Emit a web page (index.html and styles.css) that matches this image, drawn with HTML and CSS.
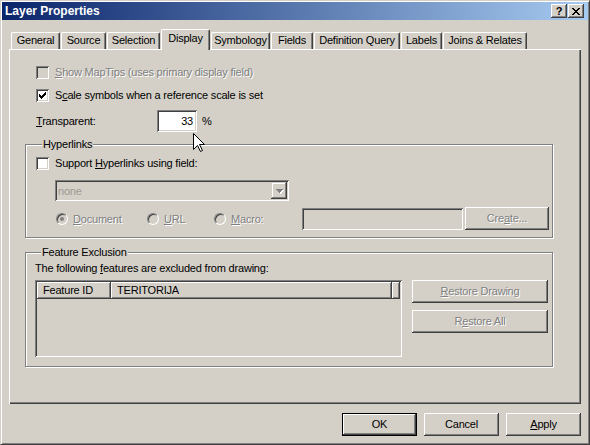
FILE: index.html
```html
<!DOCTYPE html>
<html>
<head>
<meta charset="utf-8">
<title>Layer Properties</title>
<link rel="stylesheet" href="styles.css">
</head>
<body>
<div class="window">
  <div class="titlebar">
    <span class="title">Layer Properties</span>
    <div class="tbtns">
      <span class="tbtn help">?</span>
      <span class="tbtn close"><svg width="8" height="7" viewBox="0 0 8 7" shape-rendering="crispEdges"><path d="M0 0h2v1h-2zM6 0h2v1h-2zM1 1h2v1h-2zM5 1h2v1h-2zM2 2h4v1h-4zM3 3h2v1h-2zM2 4h4v1h-4zM1 5h2v1h-2zM5 5h2v1h-2zM0 6h2v1h-2zM6 6h2v1h-2z" fill="#000"/></svg></span>
    </div>
  </div>

  <div class="tabs">
    <div class="tab w-general">General</div>
    <div class="tab w-source">Source</div>
    <div class="tab w-selection">Selection</div>
    <div class="tab w-display sel">Display</div>
    <div class="tab w-symbology">Symbology</div>
    <div class="tab w-fields">Fields</div>
    <div class="tab w-defq">Definition Query</div>
    <div class="tab w-labels">Labels</div>
    <div class="tab w-joins">Joins &amp; Relates</div>
  </div>

  <div class="panel">
    <div class="row-check first">
      <span class="check disabled"></span>
      <span class="dis"><u>S</u>how MapTips (uses primary display field)</span>
    </div>
    <div class="row-check second">
      <span class="check"><svg width="7" height="7" viewBox="0 0 7 7" shape-rendering="crispEdges"><path d="M6 0h1v1h-1zM5 1h2v1h-2zM0 2h1v1h-1zM4 2h3v1h-3zM0 3h2v1h-2zM3 3h3v1h-3zM0 4h5v1h-5zM1 5h3v1h-3zM2 6h1v1h-1z" fill="#000"/></svg></span>
      <span>S<u>c</u>ale symbols when a reference scale is set</span>
    </div>
    <div class="row-transp">
      <span class="transp-label"><u>T</u>ransparent:</span>
      <span class="textbox num">33</span>
      <span class="pct">%</span>
    </div>

    <div class="group g-hyper">
      <span class="gtitle">Hyperlinks</span>
      <div class="row-check in-group">
        <span class="check"></span>
        <span>Support <u>H</u>yperlinks using field:</span>
      </div>
      <div class="combo">
        <span class="combo-text">none</span>
        <span class="combo-btn"><svg width="8" height="5" viewBox="0 0 8 5" shape-rendering="crispEdges"><path d="M1 1h7v1h-7zM2 2h5v1h-5zM3 3h3v1h-3zM4 4h1v1h-1z" fill="#fff"/><path d="M0 0h7v1h-7zM1 1h5v1h-5zM2 2h3v1h-3zM3 3h1v1h-1z" fill="#808080"/></svg></span>
      </div>
      <div class="row-radio">
        <span class="radio-item r-doc"><span class="radio on"><span class="dot"></span></span><span class="dis"><u>D</u>ocument</span></span>
        <span class="radio-item r-url"><span class="radio"></span><span class="dis"><u>U</u>RL</span></span>
        <span class="radio-item r-macro"><span class="radio"></span><span class="dis"><u>M</u>acro:</span></span>
        <span class="textbox macro-box"></span>
        <span class="button create dis">Cre<u>a</u>te...</span>
      </div>
    </div>

    <div class="group g-excl">
      <span class="gtitle">Feature Exclusion</span>
      <div class="excl-text">The following <u>f</u>eatures are excluded from drawing:</div>
      <div class="excl-row">
        <div class="listview">
          <div class="lv-header">
            <span class="lv-col c1">Feature ID</span>
            <span class="lv-col c2">TERITORIJA</span>
            <span class="lv-col c3"></span>
          </div>
        </div>
        <div class="excl-btns">
          <span class="button restore dis"><u>R</u>estore Drawing</span>
          <span class="button restore dis">R<u>e</u>store All</span>
        </div>
      </div>
    </div>
  </div>

  <div class="btnrow">
    <span class="button main default">OK</span>
    <span class="button main">Cancel</span>
    <span class="button main"><u>A</u>pply</span>
  </div>
</div>

<svg class="cursor" width="13" height="20" viewBox="0 0 13 20"><path d="M0.5 0.5 L0.5 16.5 L4.5 12.5 L7.5 18.5 L9.5 17.5 L6.5 11.5 L11.5 11.5 Z" fill="#fff" stroke="#000" stroke-width="1" stroke-linejoin="miter"/></svg>
</body>
</html>
```

FILE: styles.css
```css
* { box-sizing: border-box; }
html, body { margin: 0; padding: 0; }
body {
  width: 590px;
  height: 445px;
  overflow: hidden;
  position: relative;
  background: #D4D0C8;
  font-family: "Liberation Sans", Arial, sans-serif;
  font-size: 11px;
  letter-spacing: -0.2px;
  color: #000;
}
u { text-decoration: underline; text-underline-offset: 1px; }

.window {
  width: 590px;
  height: 445px;
  border: 1px solid;
  border-color: #D4D0C8 #404040 #404040 #D4D0C8;
  box-shadow: inset 1px 1px #fff, inset -1px -1px #808080;
  padding: 1px;
  background: #D4D0C8;
  display: flex;
  flex-direction: column;
}

.titlebar {
  height: 18px;
  flex: none;
  background: linear-gradient(to right, #0A246A, #A6CAF0);
  display: flex;
  align-items: center;
  justify-content: space-between;
  padding: 0 4px 0 3px;
}
.title {
  color: #fff;
  font-weight: bold;
  font-size: 12px;
  letter-spacing: 0;
}
.tbtns { display: flex; gap: 1px; }
.tbtn {
  width: 16px;
  height: 14px;
  background: #D4D0C8;
  box-shadow: inset -1px -1px #404040, inset 1px 1px #fff, inset -2px -2px #808080;
  display: flex;
  align-items: center;
  justify-content: center;
  font-weight: bold;
  font-size: 11px;
  letter-spacing: 0;
  line-height: 14px;
}
.tbtn svg { display: block; }

.tabs {
  display: flex;
  align-items: flex-end;
  gap: 1px;
  height: 20px;
  margin: 9px 0 0 9px;
  position: relative;
  z-index: 1;
  flex: none;
}
.tab {
  height: 17px;
  background: #D4D0C8;
  border-top: 1px solid #fff;
  border-left: 1px solid #fff;
  border-right: 1px solid #404040;
  border-radius: 2px 2px 0 0;
  box-shadow: inset -1px 0 #808080;
  text-align: center;
  line-height: 15px;
  white-space: nowrap;
}
.tab.sel {
  height: 21px;
  margin-bottom: -1px;
  line-height: 16px;
}
.w-general { width: 49px; }
.w-source { width: 45px; }
.w-selection { width: 53px; }
.w-display { width: 49px; }
.w-symbology { width: 59px; }
.w-fields { width: 42px; }
.w-defq { width: 86px; }
.w-labels { width: 41px; }
.w-joins { width: 84px; }

.panel {
  flex: none;
  width: 572px;
  height: 355px;
  margin-left: 7px;
  box-shadow: inset 1px 1px #fff, inset -1px -1px #404040, inset -2px -2px #808080;
  padding-left: 16px;
  display: flex;
  flex-direction: column;
}

.row-check {
  display: flex;
  align-items: center;
  gap: 6px;
  height: 13px;
  line-height: 13px;
  margin-left: 11px;
  white-space: nowrap;
}
.row-check.first { margin-top: 17px; }
.row-check.second { margin-top: 10px; }
.row-check.in-group { margin: 6px 0 0 0; }

.check {
  width: 13px;
  height: 13px;
  flex: none;
  background: #fff;
  box-shadow: inset 1px 1px #808080, inset -1px -1px #fff, inset 2px 2px #404040, inset -2px -2px #D4D0C8;
  display: flex;
  align-items: center;
  justify-content: center;
}
.check.disabled { background: #D4D0C8; }
.check svg { display: block; }

.dis { color: #808080; text-shadow: 1px 1px 0 #fff; }

.row-transp {
  display: flex;
  align-items: center;
  height: 22px;
  margin: 8px 0 0 11px;
}
.transp-label { width: 121px; }
.textbox {
  background: #fff;
  box-shadow: inset 1px 1px #808080, inset -1px -1px #fff, inset 2px 2px #404040, inset -2px -2px #D4D0C8;
}
.num {
  width: 40px;
  height: 22px;
  line-height: 22px;
  text-align: right;
  padding-right: 4px;
}
.pct { margin-left: 5px; }

.group {
  width: 528px;
  border: 1px solid #808080;
  box-shadow: inset 1px 1px #fff, 1px 1px #fff;
  display: flex;
  flex-direction: column;
}
.gtitle {
  align-self: flex-start;
  margin: -7px 0 0 6px;
  padding: 0 1px;
  height: 13px;
  line-height: 13px;
  background: #D4D0C8;
  white-space: nowrap;
}
.g-hyper {
  margin-top: 12px;
  padding: 0 0 7px 10px;
}
.combo {
  width: 234px;
  height: 21px;
  margin: 10px 0 0 19px;
  background: #D4D0C8;
  box-shadow: inset 1px 1px #808080, inset -1px -1px #fff, inset 2px 2px #404040, inset -2px -2px #D4D0C8;
  padding: 2px;
  display: flex;
  align-items: center;
}
.combo-text {
  flex: 1;
  padding-left: 1px;
  color: #9C9A94;
}
.combo-btn {
  width: 16px;
  height: 17px;
  box-shadow: inset -1px -1px #404040, inset 1px 1px #D4D0C8, inset -2px -2px #808080, inset 2px 2px #fff;
  display: flex;
  align-items: center;
  justify-content: center;
}
.combo-btn svg { display: block; margin: 1px 0 0 1px; }

.row-radio {
  display: flex;
  align-items: center;
  height: 23px;
  margin: 6px 0 0 20px;
}
.radio-item {
  display: flex;
  align-items: center;
  gap: 5px;
  white-space: nowrap;
}
.r-doc { width: 91px; }
.r-url { width: 67px; }
.r-macro { width: 88px; }
.radio {
  width: 12px;
  height: 12px;
  flex: none;
  border-radius: 50%;
  border: 1px solid;
  border-color: #808080 #fff #fff #808080;
  box-shadow: inset 1px 1px #404040;
  background: #D4D0C8;
  display: flex;
  align-items: center;
  justify-content: center;
}
.dot {
  width: 4px;
  height: 4px;
  border-radius: 50%;
  background: #808080;
}
.macro-box {
  width: 161px;
  height: 22px;
  margin-right: 2px;
  background: #D4D0C8;
}

.button {
  height: 23px;
  background: #D4D0C8;
  box-shadow: inset -1px -1px #404040, inset 1px 1px #fff, inset -2px -2px #808080;
  display: flex;
  align-items: center;
  justify-content: center;
  white-space: nowrap;
  line-height: 13px;
}
.create { width: 84px; }

.g-excl {
  margin-top: 14px;
  padding: 0 0 9px 9px;
}
.excl-text {
  margin-top: 3px;
  height: 13px;
  line-height: 13px;
}
.excl-row {
  display: flex;
  margin-top: 5px;
}
.listview {
  width: 367px;
  height: 77px;
  padding: 2px;
  box-shadow: inset 1px 1px #808080, inset -1px -1px #fff, inset 2px 2px #404040, inset -2px -2px #D4D0C8;
}
.lv-header {
  display: flex;
  height: 17px;
}
.lv-col {
  height: 17px;
  line-height: 16px;
  padding-left: 6px;
  box-shadow: inset -1px -1px #404040, inset 1px 1px #fff, inset -2px -2px #808080;
  white-space: nowrap;
}
.c1 { width: 74px; }
.c2 { width: 281px; }
.c3 { flex: 1; }
.excl-btns {
  display: flex;
  flex-direction: column;
  gap: 7px;
  margin-left: 10px;
}
.restore { width: 136px; }

.btnrow {
  display: flex;
  justify-content: flex-end;
  gap: 7px;
  margin-top: 9px;
  padding-right: 7px;
  flex: none;
}
.main { width: 75px; }
.default {
  border: 1px solid #000;
  box-shadow: inset -1px -1px #404040, inset 1px 1px #fff, inset -2px -2px #808080;
}

.cursor {
  position: absolute;
  left: 193px;
  top: 133px;
  display: block;
}
```
